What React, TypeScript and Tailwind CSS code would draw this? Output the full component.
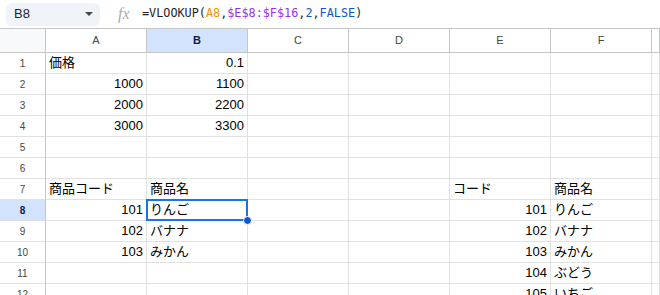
import React from 'react';

type Cell = { v: string; right?: boolean };

const cols = ['A', 'B', 'C', 'D', 'E', 'F', 'G'];

// row number -> column letter -> cell
const data: Record<number, Record<string, Cell>> = {
  1: { A: { v: '価格' }, B: { v: '0.1', right: true } },
  2: { A: { v: '1000', right: true }, B: { v: '1100', right: true } },
  3: { A: { v: '2000', right: true }, B: { v: '2200', right: true } },
  4: { A: { v: '3000', right: true }, B: { v: '3300', right: true } },
  7: { A: { v: '商品コード' }, B: { v: '商品名' }, E: { v: 'コード' }, F: { v: '商品名' } },
  8: { A: { v: '101', right: true }, B: { v: 'りんご' }, E: { v: '101', right: true }, F: { v: 'りんご' } },
  9: { A: { v: '102', right: true }, B: { v: 'バナナ' }, E: { v: '102', right: true }, F: { v: 'バナナ' } },
  10: { A: { v: '103', right: true }, B: { v: 'みかん' }, E: { v: '103', right: true }, F: { v: 'みかん' } },
  11: { E: { v: '104', right: true }, F: { v: 'ぶどう' } },
  12: { E: { v: '105', right: true }, F: { v: 'いちご' } },
};

const rows = Array.from({ length: 12 }, (_, i) => i + 1);

function FormulaBar() {
  return (
    <div className="flex h-[29px] items-center border-b border-[#c4c7c5] bg-white">
      <div className="ml-[6px] flex h-[23px] w-[94px] items-center justify-between rounded-md bg-[#f0f4f9] pl-[8px] pr-[7px]">
        <span className="text-[13px] text-[#1f1f1f]">B8</span>
        <svg width="8" height="4" viewBox="0 0 8 4">
          <path d="M0 0 L8 0 L4 4 Z" fill="#444746" />
        </svg>
      </div>
      <span className="ml-[18px] w-[16px] font-['Liberation_Serif',serif] text-[16px] italic leading-none text-[#a8abaf]">
        fx
      </span>
      <span className="ml-[8px] font-['DejaVu_Sans_Mono',monospace] text-[11.8px] text-[#1f1f1f]">
        =VLOOKUP(<span className="text-[#f09300]">A8</span>,
        <span className="text-[#9334e6]">$E$8:$F$16</span>,
        <span className="text-[#1155cc]">2</span>,
        <span className="text-[#1155cc]">FALSE</span>)
      </span>
    </div>
  );
}

export default function App() {
  return (
    <div className="h-[295px] w-[660px] overflow-hidden bg-white font-['Liberation_Sans','Noto_Sans_CJK_JP',sans-serif]">
      <FormulaBar />
      <div className="grid grid-cols-[46px_101px_101px_101px_101px_101px_101px_1fr]">
        {/* header row */}
        <div className="h-[24px] border-r border-b border-[#c4c7c5] bg-[#f8f9fa]" />
        {cols.map((c) => (
          <div
            key={c}
            className={
              c === 'B'
                ? 'flex h-[24px] items-center justify-center overflow-hidden border-r border-b border-[#c4c7c5] bg-[#d3e3fd] text-[11px] font-bold text-[#041e49]'
                : 'flex h-[24px] items-center justify-center overflow-hidden border-r border-b border-[#c4c7c5] bg-white text-[11px] text-[#444746]'
            }
          >
            {c === 'G' ? '' : c}
          </div>
        ))}

        {rows.map((r) => (
          <React.Fragment key={r}>
            <div
              className={
                r === 8
                  ? 'flex h-[21px] items-center justify-center border-r border-b border-r-[#c4c7c5] border-b-[#e1e1e1] bg-[#d3e3fd] text-[10px] font-bold text-[#041e49]'
                  : 'flex h-[21px] items-center justify-center border-r border-b border-r-[#c4c7c5] border-b-[#e1e1e1] bg-white text-[10px] text-[#444746]'
              }
            >
              {r}
            </div>
            {cols.map((c) => {
              const cell = data[r]?.[c];
              const selected = r === 8 && c === 'B';
              return (
                <div
                  key={c}
                  className={
                    'relative flex h-[21px] items-center border-r border-b border-[#e1e1e1] px-[3px] text-[13px] text-black ' +
                    (cell?.right ? 'justify-end' : 'justify-start')
                  }
                >
                  <span className="whitespace-nowrap">{cell?.v}</span>
                  {selected && (
                    <>
                      <div className="pointer-events-none absolute -top-px -left-px h-[22px] w-[102px] border-2 border-[#1a73e8]" />
                      <div className="absolute -right-[5px] -bottom-[5px] z-10 h-[9px] w-[9px] rounded-full border border-white bg-[#0b57d0]" />
                    </>
                  )}
                </div>
              );
            })}
          </React.Fragment>
        ))}
      </div>
    </div>
  );
}
